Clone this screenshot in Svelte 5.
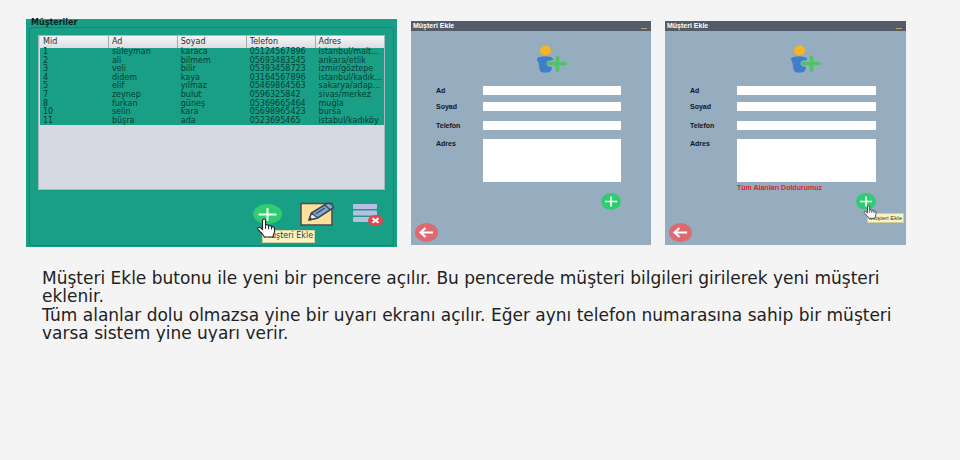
<script>
  const columns = ['Mid', 'Ad', 'Soyad', 'Telefon', 'Adres'];
  const customers = [
    ['1', 'süleyman', 'karaca', '05124567896', 'istanbul/malt...'],
    ['2', 'ali', 'bilmem', '05693483545', 'ankara/etlik'],
    ['3', 'veli', 'bilir', '05393458723', 'izmir/göztepe'],
    ['4', 'didem', 'kaya', '03164567896', 'istanbul/kadık...'],
    ['5', 'elif', 'yılmaz', '05469864563', 'sakarya/adap...'],
    ['7', 'zeynep', 'bulut', '0596325842', 'sivas/merkez'],
    ['8', 'furkan', 'güneş', '05369665464', 'muğla'],
    ['10', 'selin', 'kara', '05698965423', 'bursa'],
    ['11', 'büşra', 'ada', '0523695465', 'istabul/kadıköy']
  ];
  const dialogs = [
    { id: 'bos', warning: '', hover: false },
    { id: 'uyari', warning: 'Tüm Alanları Doldurumuz', hover: true }
  ];
</script>

{#snippet hand()}
  <svg class="hand" viewBox="0 0 20 20" aria-hidden="true">
    <path d="M6.5 11.5V2.6C6.5.4 9.6.4 9.6 2.6V7.3C10.4 6.4 12.3 6.7 12.6 8C13.6 7.2 15.3 7.6 15.6 8.9C16.8 8.3 18.5 9 18.5 10.6V13.5C18.5 15.5 17 16.5 17 19H8.2C8 16.8 4.6 14.2 2.2 11.7C.8 10.2 2.8 8.5 4.4 9.7Z" fill="#fff" stroke="#222" stroke-width="1.1" stroke-linejoin="round" />
    <path d="M9.6 7.3V11M12.6 8V11.3M15.6 9V11.6" stroke="#222" stroke-width="1" fill="none" />
  </svg>
{/snippet}

<main>
  <div class="shots">
    <section class="list">
      <h2>Müşteriler</h2>
      <div class="frame">
        <div class="scroll">
          <table>
            <thead>
              <tr>{#each columns as c}<th scope="col">{c}</th>{/each}</tr>
            </thead>
            <tbody>
              {#each customers as row}
                <tr>{#each row as cell}<td>{cell}</td>{/each}</tr>
              {/each}
            </tbody>
          </table>
        </div>
        <div class="tools">
          <div class="anchor">
            <button type="button" aria-label="Ekle">
              <svg width="29" height="20" viewBox="0 0 29 20" aria-hidden="true">
                <ellipse cx="14.5" cy="10" rx="14.5" ry="10" fill="#2fcc71" />
                <path d="M5.5 10.5H23.500M14.500 4V17" stroke="#f2fff5" stroke-width="2" />
              </svg>
            </button>
            <span class="tip" role="tooltip">Müşteri Ekle</span>
            {@render hand()}
          </div>
          <button type="button" aria-label="Düzenle">
            <svg width="35" height="24" viewBox="0 0 35 24" aria-hidden="true">
              <rect x="1" y="1.500" width="31" height="21.500" fill="#ffe09a" stroke="#4b5058" stroke-width="1.600" />
              <path d="M9 18L11.500 11L27 1.500Q29 .500 31.500 2.500T33 6L17.500 16Z" fill="#84a8d8" stroke="#3e4856" stroke-width="1.600" stroke-linejoin="round" />
              <path d="M9 18L11.500 11L17.500 16Z" fill="#f3efe6" stroke="#3e4856" stroke-width="1.300" stroke-linejoin="round" />
              <path d="M24.500 3L30.500 8M15.500 12L25 6" stroke="#3e4856" stroke-width="1.400" />
              <path d="M9 18L10.200 15L12.200 16.600Z" fill="#3e4856" />
            </svg>
          </button>
          <button type="button" aria-label="Sil">
            <svg width="30" height="24" viewBox="0 0 30 24" aria-hidden="true">
              <g fill="#b9bfe3">
                <rect y="2" width="24" height="5" rx="1" />
                <rect y="8.500" width="24" height="5" rx="1" />
                <rect y="15" width="24" height="5" rx="1" />
              </g>
              <ellipse cx="22.500" cy="18.500" rx="7.500" ry="5.500" fill="#e2474f" />
              <path d="M19.500 16.300L25.500 20.700M25.500 16.300L19.500 20.700" stroke="#fff" stroke-width="2" />
            </svg>
          </button>
        </div>
      </div>
    </section>

    {#each dialogs as d (d.id)}
      <section class="dialog">
        <header>
          <h2>Müşteri Ekle</h2>
          <button type="button" class="min" aria-label="Küçült"></button>
        </header>
        <form>
          <svg class="person" width="32" height="28" viewBox="0 0 32 28" aria-hidden="true">
            <ellipse cx="9.500" cy="5.500" rx="5.500" ry="5" fill="#f5b524" />
            <path d="M1 14.500Q1 12 4 12Q9.500 10.500 14.500 12Q17.500 12.500 17 15L13.500 15.500Q10.500 16 10.500 18.500T13.500 21.500L16 22Q15.500 27 12 27.500H7Q4 27 3.500 24L2.500 18Z" fill="#3f7ecb" />
            <path d="M13 18.500H29M21.500 12V25.500" stroke="#4fc267" stroke-width="3.500" stroke-linecap="round" />
          </svg>
          <div class="fields">
            <label for="{d.id}-ad">Ad</label><input id="{d.id}-ad" type="text" />
            <label for="{d.id}-soyad">Soyad</label><input id="{d.id}-soyad" type="text" />
            <label for="{d.id}-telefon">Telefon</label><input id="{d.id}-telefon" type="text" />
            <label for="{d.id}-adres">Adres</label><textarea id="{d.id}-adres"></textarea>
          </div>
          <p class="warning" role="alert">{d.warning}</p>
          <div class="submit">
            <div class="anchor">
              <button type="button" aria-label="Ekle">
                <svg width="20" height="17" viewBox="0 0 20 17" aria-hidden="true">
                  <ellipse cx="10" cy="8.500" rx="10" ry="8.500" fill="#2fcc71" />
                  <path d="M4 8.500H16M10 3.500V13.500" stroke="#fff" stroke-width="1.600" />
                </svg>
              </button>
              {#if d.hover}
                <span class="tip" role="tooltip">Müşteri Ekle</span>
                {@render hand()}
              {/if}
            </div>
          </div>
          <button type="button" class="back" aria-label="Geri">
            <svg width="23" height="19" viewBox="0 0 23 19" aria-hidden="true">
              <ellipse cx="11.500" cy="9.500" rx="11.500" ry="9.500" fill="#db6a71" />
              <path d="M18 9.500H6M10.500 5L5.500 9.500L10.500 14" fill="none" stroke="#fff" stroke-width="2.200" />
            </svg>
          </button>
        </form>
      </section>
    {/each}
  </div>

  <div class="text">
    <p>Müşteri Ekle butonu ile yeni bir pencere açılır. Bu pencerede müşteri bilgileri girilerek yeni müşteri eklenir.</p>
    <p>Tüm alanlar dolu olmazsa yine bir uyarı ekranı açılır. Eğer aynı telefon numarasına sahip bir müşteri varsa sistem yine uyarı verir.</p>
  </div>
</main>

<style>
  :global(body) {
    background: #f4f4f4;
  }
  main {
    padding: 19px 54px 0 26px;
  }
  h2,
  p {
    margin: 0;
  }
  button {
    display: block;
    padding: 0;
    border: 0;
    background: none;
  }
  svg {
    display: block;
  }
  .shots {
    display: grid;
    grid-template-columns: minmax(0, 371fr) minmax(0, 240fr) minmax(0, 241fr);
    align-items: center;
    gap: 14px;
  }
  .list {
    padding: 0 3px 1px;
    background: #199f85;
    font: 8px/8px 'DejaVu Sans', sans-serif;
  }
  .list h2 {
    padding-left: 2px;
    font-size: 8px;
    line-height: 8px;
    color: #06251e;
  }
  .frame {
    border: 1px solid #12866f;
    border-radius: 3px;
    padding: 7px 8px 19px;
  }
  .scroll {
    box-sizing: border-box;
    height: 155px;
    border: 1px solid #a9b8bd;
    background: #d6d9e2;
    overflow: hidden;
  }
  table {
    width: 100%;
    height: 89px;
    table-layout: fixed;
    border-collapse: collapse;
  }
  th,
  td {
    padding: 0 0 0 3px;
    text-align: left;
    font-weight: normal;
    white-space: nowrap;
  }
  th {
    height: 12px;
    border-left: 1px solid #a5a8ad;
    background: linear-gradient(#f6f6f7, #dcdde1);
    color: #2b2d30;
  }
  th:first-child {
    border-left-color: transparent;
  }
  tbody tr {
    background: #199f85;
  }
  td {
    border-left: 1px solid transparent;
    color: #053d32;
  }
  .tools {
    display: flex;
    justify-content: flex-end;
    align-items: center;
    gap: 18px;
    padding: 12px 2px 0 0;
  }
  .anchor {
    position: relative;
  }
  .hand {
    position: absolute;
    left: 3px;
    top: 14px;
    width: 20px;
    height: 20px;
  }
  .tip {
    position: absolute;
    left: 9px;
    top: 26px;
    padding: 1px 1px 2px;
    border: 1px solid #d3cf9c;
    background: #f8f4c4;
    color: #3c3a28;
    white-space: nowrap;
  }
  .dialog {
    background: #95adbe;
    font: bold 7px/9px 'Liberation Sans', sans-serif;
    color: #10161c;
  }
  header {
    display: flex;
    justify-content: space-between;
    align-items: flex-end;
    height: 10px;
    padding: 0 4px 0 2px;
    background: #545c68;
  }
  header h2 {
    font-size: 7px;
    line-height: 10px;
    color: #fff;
  }
  .min {
    width: 6px;
    height: 3px;
    border-top: 1px solid #c79c68;
  }
  form {
    padding: 14px 30px 3px 25px;
  }
  .person {
    margin-left: 100px;
  }
  .fields {
    display: grid;
    grid-template-columns: 47px 1fr;
    grid-template-rows: 16px 19px 18px 43px;
    align-items: start;
    margin-top: 13px;
  }
  input,
  textarea {
    display: block;
    box-sizing: border-box;
    width: 100%;
    height: 9px;
    margin: 0;
    padding: 0 2px;
    border: 0;
    background: #fff;
    font: inherit;
    resize: none;
  }
  textarea {
    height: 43px;
  }
  .warning {
    height: 11px;
    padding-left: 47px;
    line-height: 11px;
    color: #e01c2c;
  }
  .submit {
    display: flex;
    justify-content: flex-end;
  }
  .submit .hand {
    left: 7px;
    top: 12px;
    width: 14px;
    height: 14px;
  }
  .submit .tip {
    left: 11px;
    top: 20px;
    padding: 0 1px;
    font-size: 6px;
    line-height: 8px;
    font-weight: normal;
  }
  .back {
    margin: 13px 0 0 -21px;
  }
  .text {
    display: grid;
    gap: 1px;
    padding: 22px 0 0 16px;
    font: 17px/18px 'DejaVu Sans', sans-serif;
    color: #222;
  }
</style>
